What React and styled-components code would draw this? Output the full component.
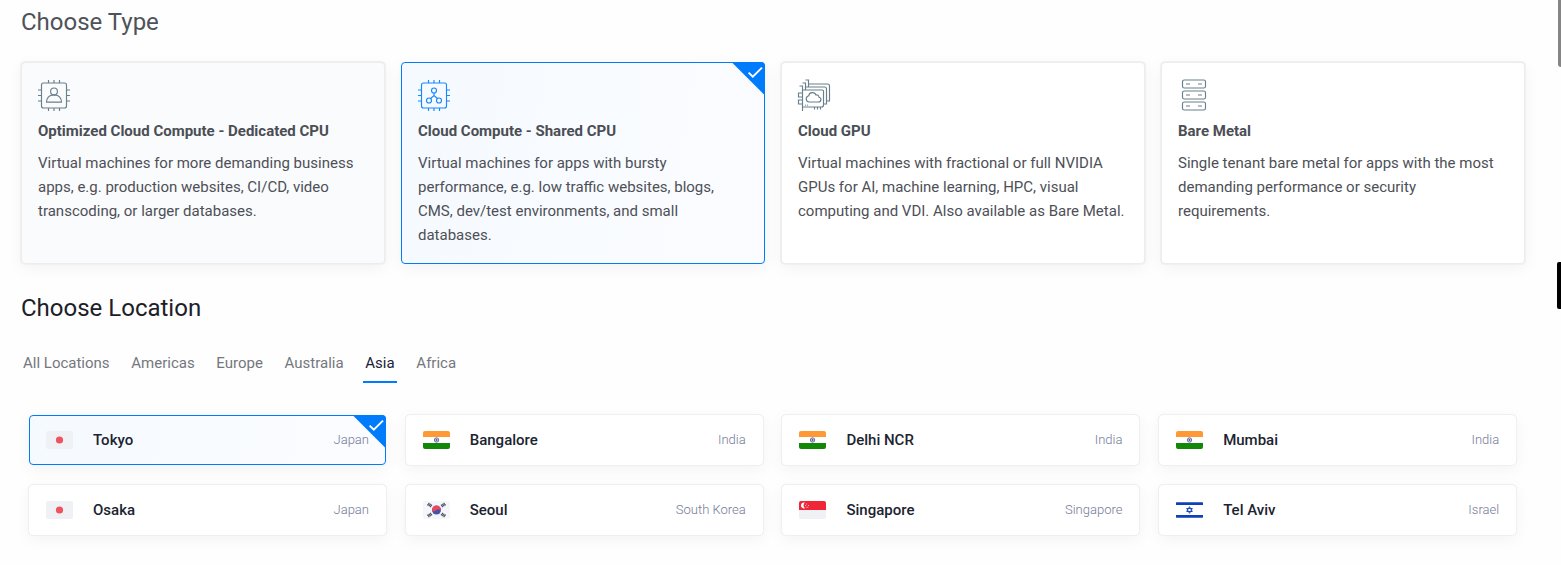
import React from "react";
import styled, { createGlobalStyle, css } from "styled-components";

const GlobalStyle = createGlobalStyle`
  * { box-sizing: border-box; }
  html, body { margin: 0; height: 565px; overflow: hidden; }
  body {
    background: #fefefe;
    font-family: Roboto, "Liberation Sans", sans-serif;
    font-size: 15px;
    color: #4d5056;
  }
`;

const Page = styled.main`
  position: relative;
  height: 565px;
  padding: 4px 0 0 21px;
  overflow: hidden;
`;

const Heading = styled.h2`
  margin: 0;
  font-size: 24px;
  line-height: 36px;
  font-weight: 400;
  color: ${(p) => (p.$strong ? "#1b2028" : "#4f5258")};
`;

const TypeGrid = styled.div`
  display: grid;
  grid-template-columns: repeat(4, 364px);
  gap: 16px;
  margin: 22px 0 26px;
`;

const selectable = css`
  position: relative;
  border-radius: 4px;
  border: 1px solid ${(p) => (p.$selected ? "#007bfc" : p.$line)};
  box-shadow: ${(p) => (p.$selected ? "" : `0 0 0 1px ${p.$ring},`)} 0 4px 16px rgba(0, 0, 0, 0.05);
  background: ${(p) =>
    p.$selected ? "linear-gradient(100deg, #f5faff, #fbfcff)" : p.$tinted ? "#fafbfd" : "#fff"};
`;

const TypeCard = styled.article`
  ${selectable}
  height: 202px;
  padding: 16px;
`;

const TypeIcon = styled.svg`
  display: block;
  width: 32px;
  height: 32px;
  overflow: visible;
  fill: none;
  stroke: ${(p) => (p.$selected ? "#1a87fb" : "#687f8c")};
  stroke-width: 1.15;
`;

const TypeTitle = styled.h3`
  margin: 9px 0;
  font-size: 15px;
  line-height: 22px;
  font-weight: 700;
  white-space: nowrap;
  color: #4b4e54;
`;

const TypeText = styled.p`
  margin: 0;
  line-height: 24px;
  white-space: pre-line;
`;

const Corner = styled.svg`
  position: absolute;
  top: -1px;
  right: -1px;
  width: 34px;
  height: 34px;
`;

const Tabs = styled.nav`
  display: flex;
  gap: 17.7px;
  margin: 20px 0 32px;
`;

const Tab = styled.a`
  padding: 6px 2px 7px;
  line-height: 22px;
  border-bottom: 2px solid ${(p) => (p.$active ? "#007bfc" : "transparent")};
  color: ${(p) => (p.$active ? "#1a2038" : "#74777d")};
`;

const LocationGrid = styled.div`
  display: grid;
  grid-template-columns: repeat(4, 357px);
  gap: 20px 19.73px;
  margin-left: 8px;
`;

const LocationCard = styled.article`
  ${selectable}
  display: flex;
  align-items: center;
  height: 50px;
  padding: 0 16px;
`;

const FlagArt = styled.svg`
  display: block;
  width: 27px;
  height: 18px;
  margin-right: 20px;
  border-radius: 2px;
`;

const City = styled.span`
  font-weight: 500;
  color: #1b2430;
`;

const Country = styled.span`
  margin-left: auto;
  padding-bottom: 2px;
  font-size: 13px;
  font-weight: 300;
  color: #747b98;
`;

const ScrollThumb = styled.div`
  position: absolute;
  top: 0;
  right: 0;
  width: 3px;
  height: 67px;
  border-radius: 0 0 0 3px;
  background: #858585;
`;

const SideHandle = styled.div`
  position: absolute;
  top: 262px;
  right: 0;
  width: 4px;
  height: 47px;
  border-radius: 2px 0 0 2px;
  background: #000;
`;

function Chip() {
  return (
    <>
      <rect x="3.5" y="3.5" width="25" height="25" rx="2" />
      <path d="M10.5 .5v3M16 .5v3M21.5 .5v3M10.5 28.5v3M16 28.5v3M21.5 28.5v3M0 10.5h3.5M0 16h3.5M0 21.5h3.5M28.5 10.5H32M28.5 16H32M28.5 21.5H32" />
    </>
  );
}

const icons = {
  user: (
    <>
      <Chip />
      <circle cx="16" cy="11.9" r="3.4" />
      <path d="M8.5 22.6c0-4 3-6.8 5.4-7h4.2c2.4.2 5.4 3 5.4 7z" strokeLinejoin="round" />
    </>
  ),
  shared: (
    <>
      <Chip />
      <circle cx="16" cy="11" r="2.5" />
      <circle cx="11" cy="21" r="2.5" />
      <circle cx="21" cy="21" r="2.5" />
      <path d="M16 13.5V16M12.6 19L16 16l3.4 3" />
    </>
  ),
  gpu: (
    <>
      <path d="M1.5 6.5h3V31.5M4.5 3.5h3v7M7.5.5h3v7" />
      <path d="M4.5 10.5h20a1 1 0 0 1 1 1v14a2 2 0 0 1-2 2h-19M7.5 7.5h19a2 2 0 0 1 2 2v15H26M10.5 4.5h19a2 2 0 0 1 2 2v15H29" />
      <path d="M4.5 13.5h-4v4h4M4.5 20.5h-4v4h4" />
      <path d="M11 22.5a3.2 3.2 0 0 1-.2-6.3c.3-3.8 6-4.2 7-.8 2-.4 3.2.8 3.2 2.4 2.7.5 2.5 4.7-.7 4.7z" />
      <path d="M16.5 27.5V30M19.5 27.5V30M22.5 27.5V30" />
      <path d="M7.5 25v1.5M9.5 25v1.5" opacity=".6" />
    </>
  ),
  server: (
    <>
      <rect x="4.5" y=".5" width="23" height="8" rx="1.8" />
      <rect x="4.5" y="11.5" width="23" height="8" rx="1.8" />
      <rect x="4.5" y="22.5" width="23" height="8" rx="1.8" />
      <path d="M8 4.5h4M20 4.5h4M8 15.5h4M20 15.5h4M8 26.5h4M20 26.5h4" />
    </>
  ),
};

const flags = {
  japan: (
    <>
      <rect width="27" height="18" fill="#f0f1f5" />
      <circle cx="13.5" cy="9" r="3.6" fill="#ee5360" />
    </>
  ),
  india: (
    <>
      <rect width="27" height="18" fill="#fff" />
      <rect width="27" height="6" fill="#ff9933" />
      <rect y="12" width="27" height="6" fill="#138808" />
      <circle cx="13.5" cy="9" r="2.2" fill="#d0d0ea" stroke="#6262ac" strokeWidth=".9" />
      <circle cx="13.5" cy="9" r=".9" fill="#5555a8" />
    </>
  ),
  korea: (
    <>
      <rect width="27" height="18" fill="#f4f6fb" />
      <circle cx="13.5" cy="9" r="4.5" fill="#4354a8" />
      <path d="M9.8 6.5A4.5 4.5 0 0 1 17.9 9.8C16.6 8 14.9 8 13.5 9S10.3 11 9.2 9.8A4.5 4.5 0 0 1 9.8 6.5z" fill="#ee4858" />
      <g stroke="#4b4f58" strokeWidth="1.15">
        <path d="M4.4 4.3l2-2.4M5.7 5.2l2-2.4M7 6.1l2-2.4" />
        <path d="M18 3.7l2 2.4M19.3 2.8l2 2.4M20.6 1.9l2 2.4" />
        <path d="M4.4 13.7l2 2.4M5.7 12.8l2 2.4M7 11.9l2 2.4" />
        <path d="M18 14.3l2-2.4M19.3 15.2l2-2.4M20.6 16.1l2-2.4" />
      </g>
    </>
  ),
  singapore: (
    <>
      <rect width="27" height="18" fill="#f0f1f5" />
      <rect width="27" height="9" fill="#ef2637" />
      <path d="M6 1.6A3 3 0 1 0 6 7.2 3.4 3.4 0 0 1 6 1.6z" fill="#fff" />
      <path d="M7.2 3h.8M6 4.5h.8M9 4.5h.8M6.8 6.2h.8M8.4 6.2h.8" stroke="#fff" strokeWidth=".8" />
    </>
  ),
  israel: (
    <>
      <rect width="27" height="18" fill="#fff" />
      <path d="M0 2.7h27M0 15.3h27" stroke="#0e40b8" strokeWidth="2.7" />
      <path d="M13.5 5.7l2.8 4.8h-5.6zM13.5 12.3l2.8-4.8h-5.6z" fill="none" stroke="#1c4abc" strokeWidth="1" />
    </>
  ),
};

const types = [
  {
    icon: "user",
    title: "Optimized Cloud Compute - Dedicated CPU",
    text: "Virtual machines for more demanding business\napps, e.g. production websites, CI/CD, video\ntranscoding, or larger databases.",
    tinted: true,
  },
  {
    icon: "shared",
    title: "Cloud Compute - Shared CPU",
    text: "Virtual machines for apps with bursty\nperformance, e.g. low traffic websites, blogs,\nCMS, dev/test environments, and small\ndatabases.",
    selected: true,
  },
  {
    icon: "gpu",
    title: "Cloud GPU",
    text: "Virtual machines with fractional or full NVIDIA\nGPUs for AI, machine learning, HPC, visual\ncomputing and VDI. Also available as Bare Metal.",
  },
  {
    icon: "server",
    title: "Bare Metal",
    text: "Single tenant bare metal for apps with the most\ndemanding performance or security\nrequirements.",
  },
];

const regions = ["All Locations", "Americas", "Europe", "Australia", "Asia", "Africa"];

const locations = [
  { city: "Tokyo", country: "Japan", flag: "japan", selected: true },
  { city: "Bangalore", country: "India", flag: "india" },
  { city: "Delhi NCR", country: "India", flag: "india" },
  { city: "Mumbai", country: "India", flag: "india" },
  { city: "Osaka", country: "Japan", flag: "japan" },
  { city: "Seoul", country: "South Korea", flag: "korea" },
  { city: "Singapore", country: "Singapore", flag: "singapore" },
  { city: "Tel Aviv", country: "Israel", flag: "israel" },
];

function SelectedCorner() {
  return (
    <Corner viewBox="0 0 34 34">
      <path d="M.5 0H30a4 4 0 0 1 4 4v29.5z" fill="#007bfc" />
      <path d="M17.6 10.6l4.2 4L31 5.6" fill="none" stroke="#fff" strokeWidth="1.9" />
    </Corner>
  );
}

export default function App() {
  return (
    <>
      <GlobalStyle />
      <Page>
        <Heading>Choose Type</Heading>
        <TypeGrid>
          {types.map((t) => (
            <TypeCard key={t.title} $selected={t.selected} $tinted={t.tinted} $line="#ededee" $ring="#f0f0f1">
              <TypeIcon viewBox="0 -0.5 32 32" $selected={t.selected}>
                {icons[t.icon]}
              </TypeIcon>
              <TypeTitle>{t.title}</TypeTitle>
              <TypeText>{t.text}</TypeText>
              {t.selected && <SelectedCorner />}
            </TypeCard>
          ))}
        </TypeGrid>
        <Heading $strong>Choose Location</Heading>
        <Tabs>
          {regions.map((r) => (
            <Tab key={r} $active={r === "Asia"}>
              {r}
            </Tab>
          ))}
        </Tabs>
        <LocationGrid>
          {locations.map((l) => (
            <LocationCard key={l.city} $selected={l.selected} $line="#fff" $ring="#efeff0">
              <FlagArt viewBox="0 0 27 18">{flags[l.flag]}</FlagArt>
              <City>{l.city}</City>
              <Country>{l.country}</Country>
              {l.selected && <SelectedCorner />}
            </LocationCard>
          ))}
        </LocationGrid>
        <ScrollThumb />
        <SideHandle />
      </Page>
    </>
  );
}
